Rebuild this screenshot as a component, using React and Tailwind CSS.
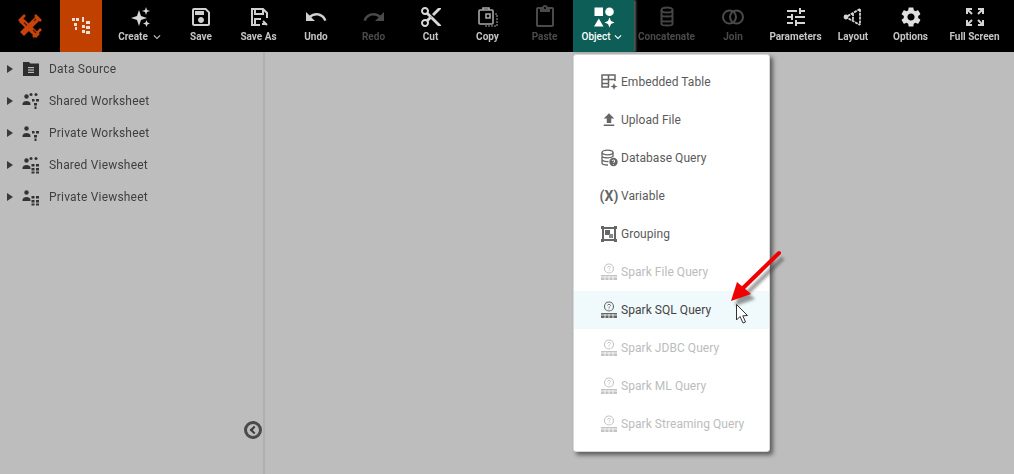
import {
  MdOutlineSave,
  MdUndo,
  MdRedo,
  MdContentCut,
  MdOutlineContentPaste,
  MdTune,
  MdSettings,
  MdKeyboardArrowDown,
  MdFileUpload,
} from "react-icons/md";

const fontFamily = { fontFamily: "Roboto, 'Liberation Sans', sans-serif" };

/* toolbar icons that no package has */
const LogoIcon = () => (
  <svg width="26" height="26" viewBox="0 0 26 26" fill="none">
    <path d="M4 7 L21 23" stroke="#c8430a" strokeWidth="5.500" />
    <path d="M21 5 L5 21" stroke="#c8430a" strokeWidth="5.500" />
    <path d="M2 8 L8 2 M16 24 L24 16 M18 2 L24 8" stroke="#c8430a" strokeWidth="2.500" />
    <path d="M7 9.500 L10 12.500 M16 17 L19 20 M17 8 L19 6" stroke="#4a1a04" strokeWidth="1.200" />
  </svg>
);

const WorksheetLogo = () => (
  <svg width="20" height="20" viewBox="0 0 20 20" fill="#eee0d6">
    <rect x="1" y="2" width="3" height="3" />
    <rect x="5" y="2" width="3" height="3" />
    <rect x="3" y="7" width="3" height="3" />
    <rect x="4" y="11" width="2" height="3" />
    <rect x="11" y="1" width="2" height="5" />
    <rect x="15" y="5" width="4" height="3" />
    <rect x="11" y="9" width="3" height="3" />
    <rect x="15" y="10" width="4" height="3" />
    <rect x="11" y="14" width="3" height="3" />
    <rect x="15" y="15" width="4" height="3" />
  </svg>
);

const Sparkles = () => (
  <svg width="22" height="22" viewBox="0 0 22 22" fill="#d6d6d6">
    <path d="M9 4 L11 10 L17 12 L11 14 L9 20 L7 14 L1 12 L7 10 Z" />
    <path d="M16 1 L17 4 L20 5 L17 6 L16 9 L15 6 L12 5 L15 4 Z" />
    <path d="M16.500 14 L17.500 16.500 L20 17.500 L17.500 18.500 L16.500 21 L15.500 18.500 L13 17.500 L15.500 16.500 Z" />
  </svg>
);

const SaveAsIcon = () => (
  <svg width="22" height="22" viewBox="0 0 22 22" fill="none" stroke="#d0d0d0" strokeWidth="2">
    <path d="M12 19 H4 V3 H15 L19 7 V12" />
    <path d="M7 3 V8 H15 V4" />
    <path d="M7 19 V13 H13 M15 15 L19 19 M14 18 H18" />
  </svg>
);

const CopyIcon = () => (
  <svg width="22" height="22" viewBox="0 0 22 22" fill="none" stroke="#a8a8a8" strokeWidth="1.600">
    <rect x="2" y="4" width="14" height="14" rx="1" />
    <path d="M6 4 V2 H12 V4 M9 8 H13 V12 H9 Z" />
    <path d="M18 8 H20 V20 H8 V19" stroke="#666" strokeDasharray="2 1" />
  </svg>
);

const DbIcon = ({ color }) => (
  <svg width="18" height="22" viewBox="0 0 18 22" fill="none" stroke={color} strokeWidth="2">
    <ellipse cx="9" cy="4" rx="5.500" ry="2.500" />
    <path d="M3.500 4 V18 C3.500 20 14.500 20 14.500 18 V4 M3.500 9 C3.500 11 14.500 11 14.500 9 M3.500 14 C3.500 16 14.500 16 14.500 14" />
  </svg>
);

const JoinIcon = ({ color }) => (
  <svg width="24" height="22" viewBox="0 0 24 22" fill="none" stroke={color} strokeWidth="2">
    <circle cx="8.500" cy="11" r="6.500" />
    <circle cx="15.500" cy="11" r="6.500" />
  </svg>
);

const LayoutIcon = () => (
  <svg width="22" height="22" viewBox="0 0 22 22" fill="none" stroke="#d4d4d4" strokeWidth="1.800">
    <path d="M18 3 L4 11 L18 19 M11 7 V15 M18 3 V19" strokeDasharray="3 0.800" />
    <circle cx="4" cy="11" r="1.500" fill="#d4d4d4" />
  </svg>
);

const FullScreenIcon = () => (
  <svg width="22" height="22" viewBox="0 0 22 22" fill="none" stroke="#d4d4d4" strokeWidth="2">
    <path d="M3 8 V3 H8 M3 3 L8 8 M14 3 H19 V8 M19 3 L14 8 M3 14 V19 H8 M3 19 L8 14 M14 19 H19 V14 M19 19 L14 14" />
  </svg>
);

const ObjectIcon = () => (
  <svg width="22" height="22" viewBox="0 0 22 22" fill="#fff">
    <rect x="1.500" y="1.500" width="8.500" height="8.500" />
    <circle cx="16.500" cy="5.800" r="4.300" />
    <path d="M5.800 12.500 L10.500 20.500 L1 20.500 Z" />
    <path d="M16.500 11.500 L18 15 L21.500 16.500 L18 18 L16.500 21.500 L15 18 L11.500 16.500 L15 15 Z" />
  </svg>
);

const toolItems = [
  { label: "Save", width: "w-[58px]", icon: <MdOutlineSave size={24} color="#d0d0d0" /> },
  { label: "Save As", width: "w-[57px]", icon: <SaveAsIcon /> },
  { label: "Undo", width: "w-[58px]", icon: <MdUndo size={24} color="#d0d0d0" /> },
  { label: "Redo", width: "w-[57px]", off: true, icon: <MdRedo size={24} color="#4a4a4a" /> },
  { label: "Cut", width: "w-[57px]", icon: <MdContentCut size={24} color="#d8d8d8" /> },
  { label: "Copy", width: "w-[57px]", icon: <CopyIcon /> },
  { label: "Paste", width: "w-[57px]", off: true, icon: <MdOutlineContentPaste size={24} color="#4a4a4a" /> },
];

const toolItemsRight = [
  { label: "Concatenate", width: "w-[65px]", off: true, icon: <DbIcon color="#444" /> },
  { label: "Join", width: "w-[68px]", off: true, icon: <JoinIcon color="#4a4a4a" /> },
  { label: "Parameters", width: "w-[57px]", icon: <MdTune size={24} color="#d4d4d4" /> },
  { label: "Layout", width: "w-[58px]", icon: <LayoutIcon /> },
  { label: "Options", width: "w-[57px]", icon: <MdSettings size={24} color="#e0e0e0" /> },
  { label: "Full Screen", width: "w-[71px]", icon: <FullScreenIcon /> },
];

const ToolItem = ({ item }) => (
  <div className={`${item.width} h-full shrink-0 flex flex-col items-center pt-[5px] blur-[0.5px]`}>
    <div className="h-[24px] flex items-center justify-center">{item.icon}</div>
    <div
      className={`text-[10px] leading-[16px] font-bold whitespace-nowrap ${
        item.off ? "text-[#4a4a4a]" : "text-[#c4c4c4]"
      }`}
    >
      {item.label}
    </div>
  </div>
);

/* tree icons */
const PersonDots = ({ shared, sheet }) => (
  <svg width="18" height="18" viewBox="0 0 18 18" fill="#333">
    <circle cx="4.500" cy="4.500" r="2.200" />
    <path d="M0.500 12 C0.500 8 8.500 8 8.500 12 V13 H0.500 Z" />
    {shared && (
      <>
        <circle cx="9" cy="2.500" r="1.500" />
        <circle cx="14" cy="2.500" r="1.500" />
      </>
    )}
    {sheet === "work" ? (
      <path d="M10 7 H12.500 V9.500 H10 Z M14 7 H17 V9.500 H14 Z M12 11 H15 V13.500 H12 Z M12.500 14.500 H14.500 V17 H12.500 Z" />
    ) : (
      <path d="M9.500 8 H12.500 V10.500 H9.500 Z M14 8 H17 V10.500 H14 Z M9.500 12 H12.500 V14.500 H9.500 Z M14 12 H17 V14.500 H14 Z M9.500 15.500 H12.500 V17.500 H9.500 Z M14 15.500 H17 V17.500 H14 Z" />
    )}
  </svg>
);

const FolderIcon = () => (
  <svg width="18" height="16" viewBox="0 0 18 16" fill="#2e2e2e">
    <path d="M1 1 H7 L8.500 2.500 H17 V15 H1 Z" />
    <rect x="6" y="6" width="6" height="1.200" fill="#bbb" />
    <rect x="6" y="8.400" width="6" height="1.200" fill="#bbb" />
    <rect x="6" y="10.800" width="6" height="1.200" fill="#bbb" />
  </svg>
);

const treeRows = [
  { label: "Data Source", icon: <FolderIcon /> },
  { label: "Shared Worksheet", icon: <PersonDots shared sheet="work" /> },
  { label: "Private Worksheet", icon: <PersonDots sheet="work" /> },
  { label: "Shared Viewsheet", icon: <PersonDots shared sheet="view" /> },
  { label: "Private Viewsheet", icon: <PersonDots sheet="view" /> },
];

/* menu icons */
const EmbeddedIcon = () => (
  <svg width="18" height="18" viewBox="0 0 18 18" fill="none" stroke="#666" strokeWidth="1.500">
    <path d="M9 14 H2 V2 H15 V8 M2 6.500 H15 M8.500 2 V14 M2 10.500 H8.500" />
    <path d="M14 10 L15 12.500 L17.500 13.500 L15 14.500 L14 17 L13 14.500 L10.500 13.500 L13 12.500 Z" fill="#666" stroke="none" />
  </svg>
);

const DbQueryIcon = () => (
  <svg width="18" height="18" viewBox="0 0 18 18" fill="none" stroke="#666" strokeWidth="1.300">
    <ellipse cx="7.500" cy="3.500" rx="5.500" ry="2.300" />
    <path d="M2 3.500 V14 C2 15.500 5 16 8 16 M2 7 C2 9 10 9.500 13 7.500 V3.500 M2 10.500 C2 12 5 12.800 8.500 12.500" />
    <circle cx="13.500" cy="13" r="4.200" fill="#666" stroke="none" />
    <path d="M12.200 12 C12.200 10.700 14.800 10.700 14.800 12 C14.800 13 13.500 13 13.500 14 M13.500 15 V15.600" stroke="#fff" strokeWidth="1" />
  </svg>
);

const GroupingIcon = () => (
  <svg width="18" height="18" viewBox="0 0 18 18" fill="#666">
    <path d="M1 1 H4 V2 H14 V1 H17 V4 H16 V14 H17 V17 H14 V16 H4 V17 H1 V14 H2 V4 H1 Z M4 4 V14 H14 V4 Z" />
    <rect x="5" y="5" width="5" height="5" />
    <rect x="9" y="9" width="4" height="4" fill="#888" />
  </svg>
);

const SparkIcon = ({ color }) => (
  <svg width="18" height="18" viewBox="0 0 18 18" fill="none" stroke={color}>
    <circle cx="9" cy="5.500" r="4.500" strokeWidth="1.100" />
    <path d="M7.500 4.500 C7.500 3 10.500 3 10.500 4.500 C10.500 5.500 9 5.500 9 6.800 M9 7.500 V8.300" strokeWidth="0.900" />
    <path d="M1 12 H17 V17 H1 Z" fill={color} stroke="none" />
    <path d="M5 13 V17 M9 13 V17 M13 13 V17 M1 14 H17" stroke="#fff" strokeWidth="0.800" />
  </svg>
);

const menuItems = [
  { label: "Embedded Table", icon: <EmbeddedIcon /> },
  { label: "Upload File", icon: <MdFileUpload size={22} color="#666" /> },
  { label: "Database Query", icon: <DbQueryIcon /> },
  {
    label: "Variable",
    icon: <span className="text-[14px] font-bold text-[#666] whitespace-nowrap">(X)</span>,
  },
  { label: "Grouping", icon: <GroupingIcon /> },
  { label: "Spark File Query", off: true, icon: <SparkIcon color="#c4c4c4" /> },
  { label: "Spark SQL Query", hover: true, icon: <SparkIcon color="#666" /> },
  { label: "Spark JDBC Query", off: true, icon: <SparkIcon color="#c4c4c4" /> },
  { label: "Spark ML Query", off: true, icon: <SparkIcon color="#c4c4c4" /> },
  { label: "Spark Streaming Query", off: true, icon: <SparkIcon color="#c4c4c4" /> },
];

const App = () => {
  return (
    <div className="relative w-[1014px] h-[474px] overflow-hidden flex flex-col bg-[#bdbdbd]" style={fontFamily}>
      {/* Top toolbar */}
      <div className="h-[52px] shrink-0 bg-black flex">
        <div className="w-[60px] h-full flex items-center justify-center blur-[0.5px]">
          <LogoIcon />
        </div>
        <div className="w-[42px] h-full bg-[#c04000] flex items-center justify-center">
          <div className="blur-[0.5px] flex">
            <WorksheetLogo />
          </div>
        </div>
        <div className="w-[70px] h-full flex flex-col items-center pl-[8px] pt-[5px] blur-[0.5px]">
          <div className="h-[24px] flex items-center justify-center">
            <Sparkles />
          </div>
          <div className="flex items-center text-[10px] leading-[16px] font-bold text-[#c4c4c4]">
            Create
            <MdKeyboardArrowDown size={14} className="ml-[2px]" />
          </div>
        </div>
        {toolItems.map((item) => (
          <ToolItem key={item.label} item={item} />
        ))}
        <div className="w-[61px] h-full shrink-0 bg-[#0e5e58] flex flex-col items-center pt-[5px] shadow-[2px_0_2px_rgba(130,130,130,0.7)]">
          <div className="h-[24px] flex items-center justify-center">
            <ObjectIcon />
          </div>
          <div className="flex items-center text-[10px] leading-[16px] font-medium text-white">
            Object
            <MdKeyboardArrowDown size={14} className="ml-[1px]" />
          </div>
        </div>
        {toolItemsRight.map((item) => (
          <ToolItem key={item.label} item={item} />
        ))}
      </div>

      {/* Body */}
      <div className="flex-1 flex min-h-0">
        <div className="relative w-[265px] shrink-0 border-r-2 border-[#b0b0b0] pt-px">
          {treeRows.map((row) => (
            <div key={row.label} className="h-[32px] flex items-center pl-[7px] blur-[0.3px]">
              <div className="w-0 h-0 border-y-[4.500px] border-y-transparent border-l-[6px] border-l-[#3a3a3a]" />
              <div className="w-[18px] ml-[9px] flex items-center justify-center">{row.icon}</div>
              <div className="ml-[9px] text-[12px] text-[#3f3f3f] tracking-[0.2px]">{row.label}</div>
            </div>
          ))}
          <div className="absolute left-[244px] top-[369px] w-[18px] h-[18px] rounded-full border-[3px] border-[#4a4a4a] flex items-center justify-center blur-[0.4px]">
            <div className="w-[6px] h-[6px] border-l-2 border-b-2 border-[#3c3c3c] rotate-45 ml-[2px]" />
          </div>
        </div>
        <div className="flex-1" />
      </div>

      {/* Object dropdown */}
      <div className="absolute left-[573px] top-[54px] w-[197px] h-[398px] bg-white border border-[#d8d8d8] rounded-[3px] pt-[8px] shadow-[3px_3px_4px_rgba(60,60,60,0.75)]">
        {menuItems.map((item) => (
          <div
            key={item.label}
            className={`h-[38px] flex items-center pl-[26px] text-[12px] tracking-[0.05px] whitespace-nowrap ${
              item.hover ? "bg-[#f0f9fb] text-[#444]" : item.off ? "text-[#bcbcbc]" : "text-[#5a5a5a]"
            }`}
          >
            <div className="w-[18px] flex items-center justify-center">{item.icon}</div>
            <span className="ml-[3px]">{item.label}</span>
          </div>
        ))}
      </div>

      {/* Red annotation arrow */}
      <svg className="absolute left-[722px] top-[246px]" width="70" height="70" viewBox="0 0 70 70" fill="none">
        <g opacity="0.55" transform="translate(4 5)" className="blur-[1.5px]">
          <path d="M57 7 L18 45" stroke="#444" strokeWidth="4" />
          <path d="M9 55 L15 36 L29 48 Z" fill="#444" />
        </g>
        <path d="M57 7 L18 45" stroke="#f00000" strokeWidth="4" strokeLinecap="round" />
        <path d="M9 55 L15 36 L29 48 Z" fill="#f00000" />
      </svg>

      {/* Mouse pointer */}
      <svg className="absolute left-[735px] top-[303px]" width="14" height="22" viewBox="0 0 14 22">
        <path d="M1.500 1.500 V17 L5 13.500 L8 20 L10.500 19 L7.800 12.800 L12.500 12.500 Z" fill="#fff" stroke="#333" strokeWidth="1" />
      </svg>
    </div>
  );
};

export default App;
